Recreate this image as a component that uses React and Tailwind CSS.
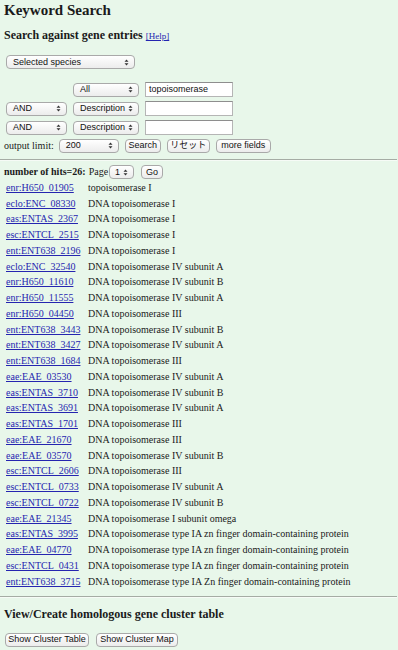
import React from "react";

const rows = [
    ["enr:H650_01905", "topoisomerase I"],
    ["eclo:ENC_08330", "DNA topoisomerase I"],
    ["eas:ENTAS_2367", "DNA topoisomerase I"],
    ["esc:ENTCL_2515", "DNA topoisomerase I"],
    ["ent:ENT638_2196", "DNA topoisomerase I"],
    ["eclo:ENC_32540", "DNA topoisomerase IV subunit A"],
    ["enr:H650_11610", "DNA topoisomerase IV subunit B"],
    ["enr:H650_11555", "DNA topoisomerase IV subunit A"],
    ["enr:H650_04450", "DNA topoisomerase III"],
    ["ent:ENT638_3443", "DNA topoisomerase IV subunit B"],
    ["ent:ENT638_3427", "DNA topoisomerase IV subunit A"],
    ["ent:ENT638_1684", "DNA topoisomerase III"],
    ["eae:EAE_03530", "DNA topoisomerase IV subunit A"],
    ["eas:ENTAS_3710", "DNA topoisomerase IV subunit B"],
    ["eas:ENTAS_3691", "DNA topoisomerase IV subunit A"],
    ["eas:ENTAS_1701", "DNA topoisomerase III"],
    ["eae:EAE_21670", "DNA topoisomerase III"],
    ["eae:EAE_03570", "DNA topoisomerase IV subunit B"],
    ["esc:ENTCL_2606", "DNA topoisomerase III"],
    ["esc:ENTCL_0733", "DNA topoisomerase IV subunit A"],
    ["esc:ENTCL_0722", "DNA topoisomerase IV subunit B"],
    ["eae:EAE_21345", "DNA topoisomerase I subunit omega"],
    ["eas:ENTAS_3995", "DNA topoisomerase type IA zn finger domain-containing protein"],
    ["eae:EAE_04770", "DNA topoisomerase type IA zn finger domain-containing protein"],
    ["esc:ENTCL_0431", "DNA topoisomerase type IA zn finger domain-containing protein"],
    ["ent:ENT638_3715", "DNA topoisomerase type IA Zn finger domain-containing protein"],
];

const sans = { fontFamily: '"Liberation Sans", Arial, "Noto Sans CJK JP", sans-serif' };

const Arrows = () => (
    <svg width="5" height="7" viewBox="0 0 5 7" className="shrink-0">
        <path d="M2.5 0.5L4.5 2.8H0.5Z M2.5 6.5L4.5 4.2H0.5Z" fill="#333" />
    </svg>
);

// mac-style popup select
const Select = ({ label, className }) => (
    <div
        className={
            "h-[14px] shrink-0 flex items-center justify-between pl-[6px] pr-[5px] rounded-[4px] border border-[#a9a9a9] bg-gradient-to-b from-white to-[#ececec] text-[9px] text-[#111] whitespace-nowrap " +
            className
        }
    >
        <span className="leading-none">{label}</span>
        <Arrows />
    </div>
);

const Button = ({ label, className }) => (
    <div
        className={
            "h-[14px] shrink-0 flex items-center justify-center rounded-[4px] border border-[#a9a9a9] bg-gradient-to-b from-white to-[#ececec] text-[9px] text-[#111] leading-none whitespace-nowrap " +
            (className || "")
        }
    >
        {label}
    </div>
);

const Input = ({ value }) => (
    <div className="w-[88px] h-[15px] bg-white border border-[#b5b5b5] border-t-[#8e8e8e] flex items-center pl-[3px] text-[9px] text-[#111] leading-none">
        {value}
    </div>
);

const Rule = () => <div className="h-[2px] border-t border-[#a5aca4] border-b border-b-[#f6fbf6] mr-[1px]" />;

export default function App() {
    return (
        <div
            className="min-h-[650px] bg-[#e8f7ea] text-[#1a1a1a] pl-[4px] overflow-hidden"
            style={{ fontFamily: '"Liberation Serif", "Times New Roman", serif' }}
        >
            <h1 className="text-[15px] font-bold leading-[18px] pt-[1px]">Keyword Search</h1>

            <h2 className="mt-[9px] text-[12px] font-bold leading-[15px]">
                Search against gene entries{" "}
                <a href="#" className="text-[9px] font-normal text-[#2525b0] underline">
                    [Help]
                </a>
            </h2>

            <div style={sans}>
                <div className="mt-[11px] pl-[2px]">
                    <Select label="Selected species" className="w-[129px]" />
                </div>

                <div className="mt-[13px] flex items-center pl-[69px] gap-[6px]">
                    <Select label="All" className="w-[66px]" />
                    <Input value="topoisomerase" />
                </div>
                <div className="mt-[4px] flex items-center pl-[2px] gap-[6px]">
                    <Select label="AND" className="w-[61px]" />
                    <Select label="Description" className="w-[66px]" />
                    <Input value="" />
                </div>
                <div className="mt-[4px] flex items-center pl-[2px] gap-[6px]">
                    <Select label="AND" className="w-[61px]" />
                    <Select label="Description" className="w-[66px]" />
                    <Input value="" />
                </div>
                <div className="mt-[3px] flex items-center">
                    <span
                        className="text-[10px] mr-[5px]"
                        style={{ fontFamily: '"Liberation Serif", "Times New Roman", serif' }}
                    >
                        output limit:
                    </span>
                    <Select label="200" className="w-[60px]" />
                    <Button label="Search" className="ml-[6px] w-[36px]" />
                    <Button label="リセット" className="ml-[6px] w-[43px]" />
                    <Button label="more fields" className="ml-[6px] w-[55px]" />
                </div>
            </div>

            <div className="mt-[6px] -ml-[4px]">
                <Rule />
            </div>

            <div className="mt-[4px] flex items-center text-[10px] leading-none">
                <span className="font-bold">number of hits=26:</span>
                <span className="ml-[3px]">Page</span>
                <div className="ml-[1px]" style={sans}>
                    <Select label="1" className="w-[25px] !pl-[5px]" />
                </div>
                <div className="ml-[7px]" style={sans}>
                    <Button label="Go" className="w-[22px]" />
                </div>
            </div>

            <div className="mt-[1px] flex flex-col">
                {rows.map(([id, desc]) => (
                    <div key={id} className="h-[15.76px] flex items-center text-[10px] leading-none">
                        <a href="#" className="w-[84px] shrink-0 pl-[2px] text-[#2525b0] underline">
                            {id}
                        </a>
                        <span className="whitespace-nowrap">{desc}</span>
                    </div>
                ))}
            </div>

            <div className="mt-[6px] -ml-[4px]">
                <Rule />
            </div>

            <h2 className="mt-[9px] text-[12px] font-bold leading-[15px]">
                View/Create homologous gene cluster table
            </h2>

            <div className="mt-[11px] flex items-center pl-[1px] gap-[7px]" style={sans}>
                <Button label="Show Cluster Table" className="w-[84px]" />
                <Button label="Show Cluster Map" className="w-[82px]" />
            </div>
        </div>
    );
}
